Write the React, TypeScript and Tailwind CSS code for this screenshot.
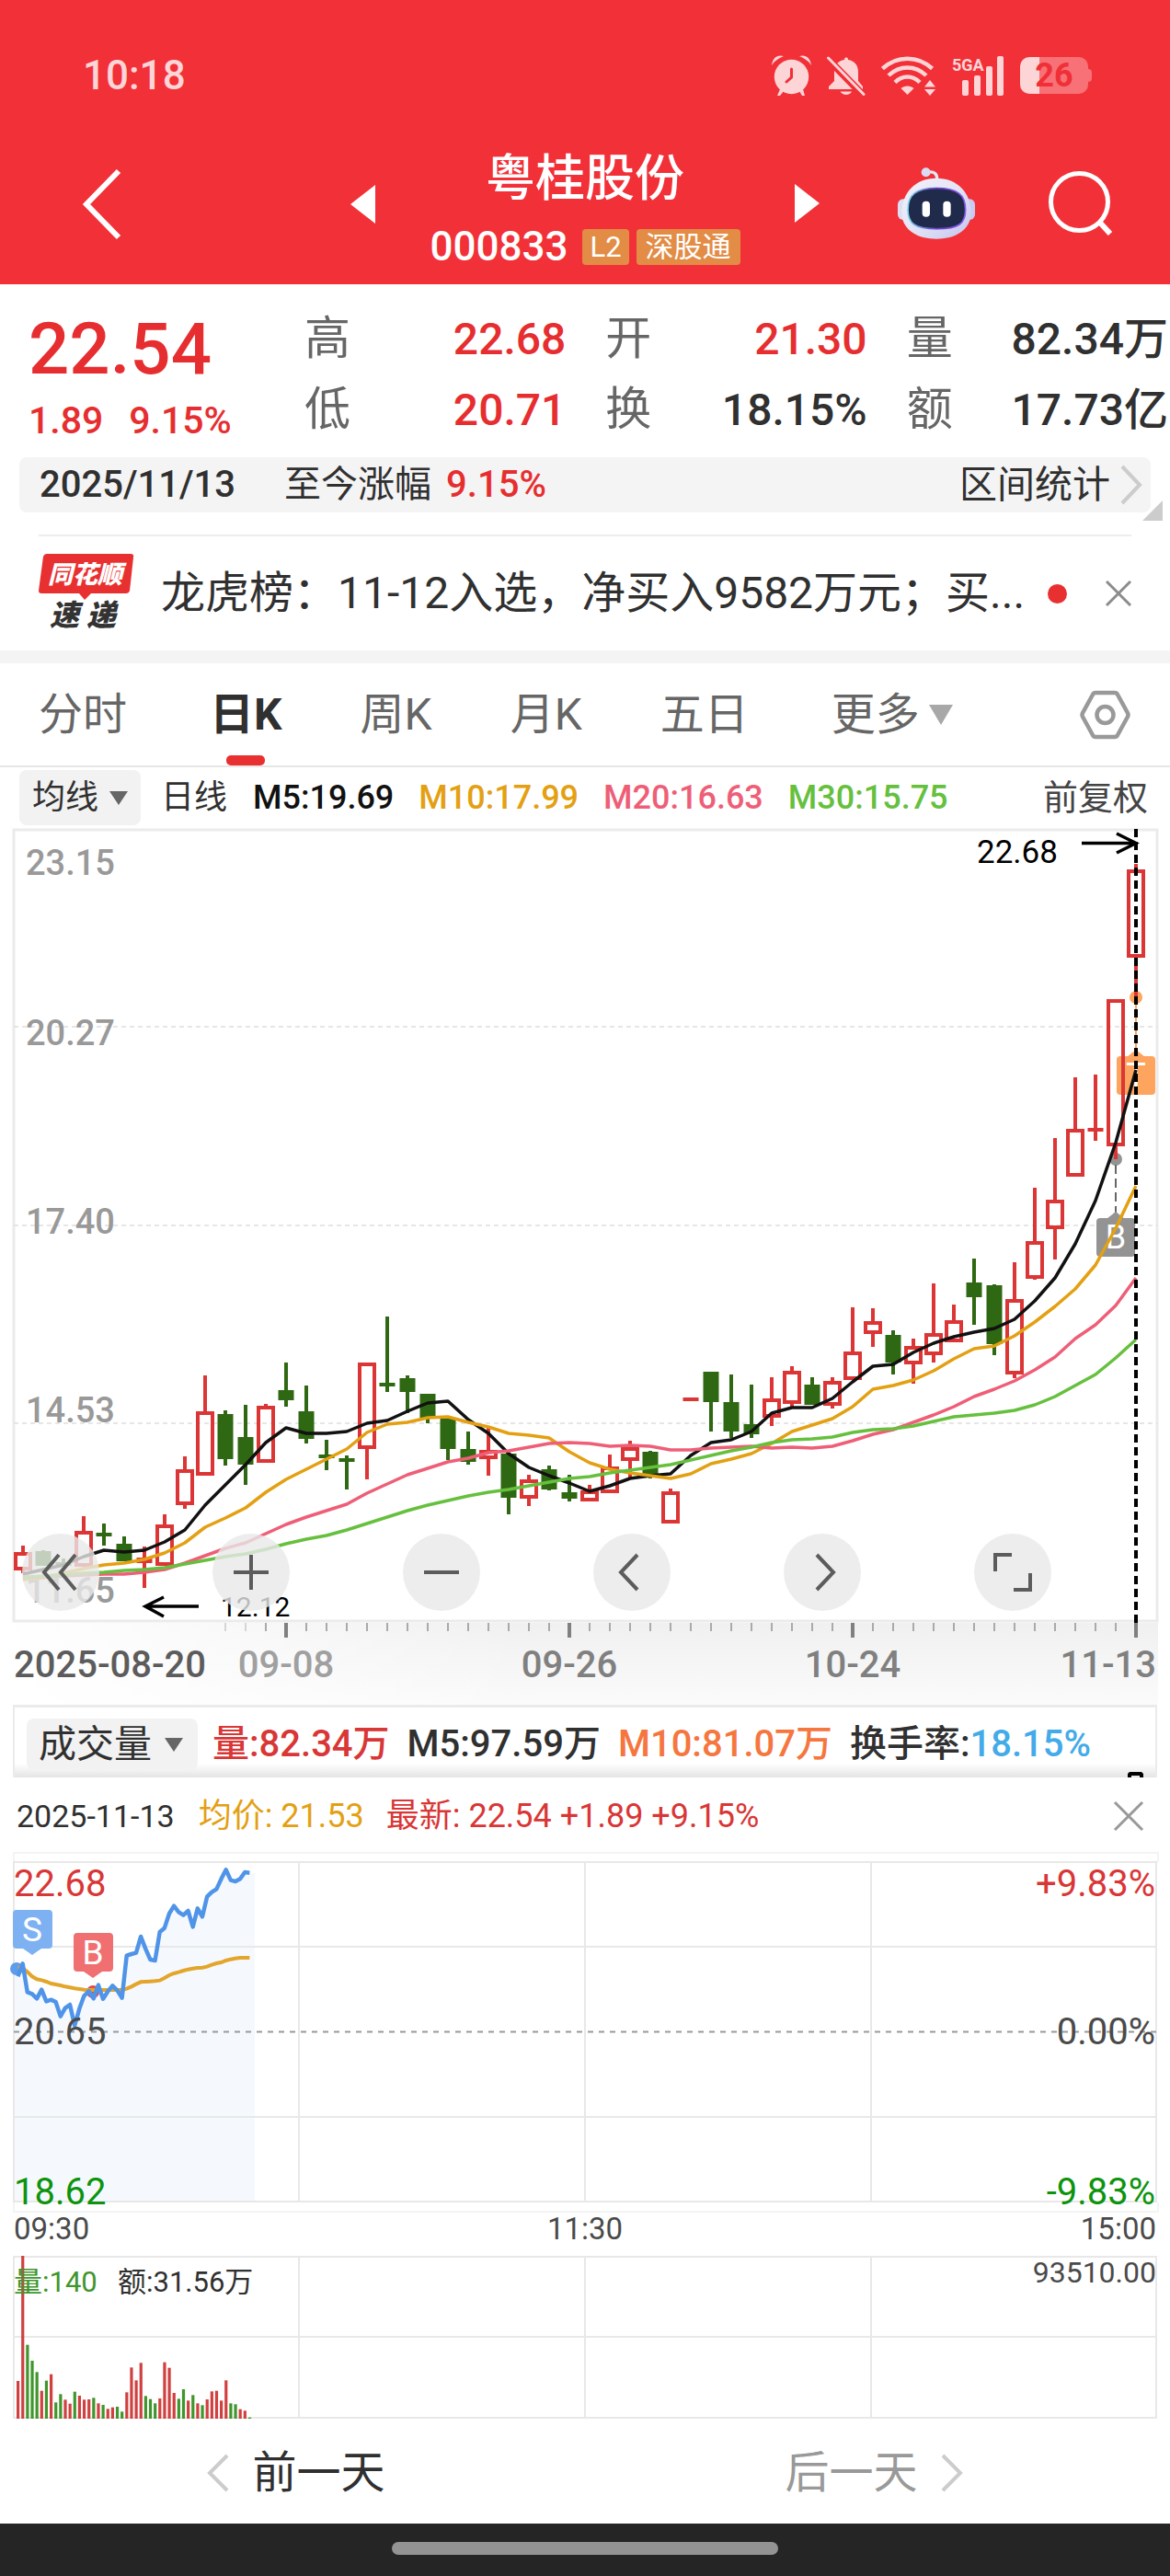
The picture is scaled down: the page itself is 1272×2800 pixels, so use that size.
import React from "react";

type Candle = [up: 0 | 1, high: number, top: number, bottom: number, low: number];

const CANDLES: Candle[] = [
  [1, 780, 787, 807, 810], [0, 785, 786, 802, 802], [0, 794, 800, 800, 803], [1, 748, 764, 803, 803],
  [0, 756, 768, 768, 780], [0, 770, 778, 797, 797], [1, 781, 795, 801, 826], [1, 746, 757, 802, 802],
  [1, 683, 697, 736, 740], [1, 595, 634, 704, 704], [0, 633, 637, 686, 693], [0, 627, 662, 692, 714],
  [1, 626, 628, 690, 690], [0, 581, 611, 622, 629], [0, 606, 634, 664, 669], [0, 665, 683, 683, 698],
  [0, 682, 687, 687, 719], [1, 581, 581, 675, 708], [0, 531, 605, 605, 613], [0, 595, 598, 613, 636],
  [0, 615, 615, 641, 647], [0, 641, 641, 675, 687], [0, 656, 675, 689, 692], [1, 652, 676, 686, 704],
  [0, 680, 680, 728, 746], [1, 703, 708, 729, 737], [0, 693, 697, 719, 720], [0, 703, 724, 731, 732],
  [1, 714, 720, 732, 732], [1, 681, 694, 723, 723], [1, 666, 673, 688, 706], [0, 677, 678, 704, 707],
  [1, 718, 721, 756, 756], [1, 621, 621, 621, 621], [0, 591, 591, 624, 656], [0, 594, 624, 656, 663],
  [0, 605, 648, 659, 663], [1, 597, 620, 641, 650], [1, 585, 590, 626, 629], [0, 597, 605, 627, 627],
  [1, 597, 601, 628, 631], [1, 521, 569, 600, 600], [1, 522, 536, 550, 564], [0, 546, 551, 581, 594],
  [1, 555, 563, 583, 604], [1, 495, 549, 573, 581], [1, 518, 535, 559, 559], [0, 468, 494, 510, 540],
  [0, 496, 497, 561, 573], [1, 472, 512, 594, 598], [1, 391, 449, 490, 491], [1, 337, 404, 436, 469],
  [1, 271, 327, 379, 379], [1, 268, 328, 328, 340], [1, 186, 186, 346, 360], [1, 39, 45, 141, 183],
];

const MA5 = [811, 806, 801, 792, 785, 787, 785, 776, 763, 736, 714, 692, 668, 652, 658, 658, 656, 647, 644, 634, 625, 623, 643, 658, 680, 695, 704, 712, 721, 715, 707, 704, 702, 682, 668, 665, 656, 636, 630, 630, 620, 602, 585, 583, 570, 560, 553, 548, 544, 534, 514, 489, 452, 405, 342, 263];
const MA10 = [817, 815, 810, 805, 801, 799, 795, 788, 777, 760, 750, 739, 722, 708, 697, 686, 675, 657, 648, 646, 641, 640, 646, 651, 658, 660, 663, 678, 690, 697, 701, 704, 707, 702, 691, 686, 680, 669, 656, 649, 642, 629, 610, 606, 600, 590, 577, 566, 563, 552, 537, 520, 501, 475, 435, 389];
const MA20 = [814, 814, 813, 812, 811, 811, 809, 806, 799, 791, 783, 777, 767, 757, 749, 742, 735, 723, 713, 703, 696, 689, 685, 679, 677, 673, 669, 668, 669, 672, 671, 672, 676, 676, 674, 673, 672, 674, 673, 674, 672, 666, 659, 654, 646, 638, 629, 618, 610, 601, 589, 575, 555, 540, 519, 489];
const MA30 = [815, 813, 812, 810, 809, 807, 806, 804, 800, 796, 792, 789, 784, 778, 773, 769, 763, 756, 749, 742, 736, 731, 726, 722, 719, 715, 711, 707, 705, 701, 698, 695, 692, 687, 682, 677, 673, 668, 665, 664, 662, 657, 654, 653, 650, 645, 640, 638, 636, 633, 627, 618, 606, 594, 576, 556];

const PRICE = [415, 373, 466, 472, 487, 458, 496, 491, 498, 545, 518, 507, 575, 520, 478, 463, 487, 443, 488, 464, 445, 460, 485, 347, 342, 338, 285, 325, 360, 363, 270, 257, 210, 185, 205, 215, 201, 253, 193, 220, 155, 140, 130, 97, 67, 101, 105, 97, 75, 77];
const AVERAGE = [385, 388, 400, 415, 424, 427, 432, 438, 441, 444, 448, 451, 454, 456, 458, 459, 459, 459, 459, 459, 459, 459, 459, 455, 448, 440, 433, 432, 431, 430, 428, 420, 411, 405, 401, 396, 392, 389, 387, 386, 383, 377, 372, 369, 363, 359, 356, 354, 354, 354];
const VOLUME = [123, 531, 241, 189, 152, 91, 124, 145, 53, 80, 62, 49, 88, 75, 62, 63, 68, 50, 45, 32, 37, 39, 23, 86, 167, 125, 182, 74, 64, 50, 66, 184, 166, 84, 65, 96, 59, 77, 50, 44, 63, 89, 91, 59, 125, 50, 47, 31, 26, 4];
const VOLUME_UP = "rrgggrgrggrrgrrrgrgrrggrrrrgggrrrrggrgrgrrrrrggrrg";

const dayX = (i: number) => 25 + 22 * i;
const minuteX = (i: number) => 19.5 + 5.14 * i;
const dayLine = (v: number[]) => v.map((y, i) => `${dayX(i)},${y}`).join(" ");
const minuteLine = (v: number[]) => v.map((y, i) => `${minuteX(i)},${y / 3}`).join(" ");

function StatusBar() {
  return (
    <div className="flex h-[164px] items-center justify-between pl-[90px] pr-[85px] text-[#fdd5d7]">
      <span className="text-[44px] font-medium leading-[52px]">10:18</span>
      <div className="flex items-center gap-[17px]">
        <svg width="43" height="44" viewBox="0 0 43 44" fill="currentColor" aria-label="闹钟">
          <circle cx="21.5" cy="23.5" r="18.7" />
          <path d="M0 11C1 3 6-1 13 1C8 3 3 6 0 11ZM43 11C42 3 37-1 30 1C35 3 40 6 43 11Z" />
          <path d="M9 37L6 44H9L13 39ZM34 37L36 44H33L30 39Z" />
          <path d="M21.5 15V24L16 29" fill="none" stroke="#f02f37" strokeWidth="3" strokeLinecap="round" />
        </svg>
        <svg width="42" height="43" viewBox="0 0 42 43" fill="currentColor" aria-label="静音">
          <path d="M21 1.5C22 1.500 23 2 23 4C30 5 34 10 34 17V27L39 33V36H2V33L8 27V17C8 10 12 5 19 4C19 2 20 1.500 21 1.500Z" />
          <path d="M14.500 38.500H27C25 43 17 43 14.500 38.500Z" />
          <path d="M-1 1L41 44" stroke="#f02f37" strokeWidth="8" />
          <path d="M1.500 2L40 41.500" stroke="currentColor" strokeWidth="3" strokeLinecap="round" />
        </svg>
        <svg width="60" height="43" viewBox="0 0 60 43" aria-label="无线网络">
          <g fill="none" stroke="currentColor" strokeWidth="4.500">
            <path d="M1.500 13.500C17-1 40-1 55.500 13.500" />
            <path d="M8 21C20 9.500 37 9.500 49 21" />
            <path d="M15 28.500C23 20.500 34 20.500 42 28.500" />
          </g>
          <path d="M28.500 42L21.500 35C25 31.500 32 31.500 35.500 35Z" fill="currentColor" />
          <path d="M47 33.500L53 26L59 33.500ZM47 36L53 43L59 36Z" fill="currentColor" />
        </svg>
        <svg width="57" height="44" viewBox="0 0 57 44" fill="currentColor" aria-label="5GA">
          <text x="0" y="17" fontSize="18" fontWeight="700" fontFamily="Roboto, sans-serif">5GA</text>
          <rect x="11" y="27" width="7" height="17" rx="2" />
          <rect x="24" y="22" width="7" height="22" rx="2" />
          <rect x="37" y="12" width="7" height="32" rx="2" />
          <rect x="49" y="1" width="7" height="43" rx="2" />
        </svg>
        <div className="relative flex items-center">
          <div className="flex h-10 w-[74px] items-center justify-center rounded-[10px] bg-[linear-gradient(to_right,#fdd5d7_21px,#f77176_21px)] text-[36px] font-bold leading-10 text-[#f02f37]">26</div>
          <div className="h-[14px] w-1 rounded-r bg-[#f77176]" />
        </div>
      </div>
    </div>
  );
}

function Robot() {
  return (
    <svg width="84" height="78" viewBox="465 428 252 232">
      <defs>
        <linearGradient id="shell" x1="0" y1="0" x2="1" y2="1">
          <stop offset="0" stopColor="#f2f3fb" />
          <stop offset=".5" stopColor="#e4e4f5" />
          <stop offset="1" stopColor="#c3c5ee" />
        </linearGradient>
        <linearGradient id="rim" x1="0" y1="0" x2="1" y2="0">
          <stop offset="0" stopColor="#7fd6ee" />
          <stop offset=".5" stopColor="#6a3ec9" />
          <stop offset="1" stopColor="#8c5cf0" />
        </linearGradient>
      </defs>
      <path d="M560 443C585 438 595 448 593 470" fill="none" stroke="#e6e6f6" strokeWidth="10" />
      <circle cx="557" cy="443" r="15" fill="#d9dcf2" />
      <rect x="465" y="530" width="40" height="68" rx="18" fill="#dcdef3" />
      <rect x="677" y="530" width="40" height="68" rx="18" fill="#c9caef" />
      <path d="M591 462C660 462 704 510 704 575C704 630 655 660 591 660C527 660 478 630 478 575C478 510 522 462 591 462Z" fill="url(#shell)" />
      <path d="M592 495C660 495 686 515 686 565C686 610 665 627 592 627C520 627 498 610 498 565C498 515 524 495 592 495Z" fill="#202a4a" stroke="url(#rim)" strokeWidth="5" />
      <rect x="545" y="537" width="25" height="51" rx="12" fill="#fff" />
      <rect x="613" y="537" width="25" height="51" rx="12" fill="#fff" />
    </svg>
  );
}

function TitleBar() {
  return (
    <div className="grid h-[145px] grid-cols-[1fr_456px_1fr] items-start text-white">
      <div className="flex items-center justify-between pl-[88px] pt-[18px]">
        <button aria-label="返回">
          <svg width="46" height="80" viewBox="0 0 46 80" fill="none" stroke="currentColor" strokeWidth="6"><path d="M41 4L6 40L41 76" /></svg>
        </button>
        <button aria-label="上一只">
          <svg width="27" height="42" viewBox="0 0 27 42" fill="currentColor"><path d="M27 0V42L0 21Z" /></svg>
        </button>
      </div>
      <div className="flex flex-col items-center pt-[2px]">
        <h1 className="text-[54px] font-medium leading-[58px]">粤桂股份</h1>
        <div className="mt-[24px] flex items-center gap-2">
          <span className="mr-2 text-[44px] font-medium leading-10">000833</span>
          <span className="rounded bg-[#e28c46] px-[8px] text-[31px] leading-[39px]">L2</span>
          <span className="rounded bg-[#e28c46] px-[10px] text-[31px] leading-[39px]">深股通</span>
        </div>
      </div>
      <div className="flex items-center justify-between pr-[62px] pt-[18px]">
        <button aria-label="下一只">
          <svg width="27" height="42" viewBox="0 0 27 42" fill="currentColor"><path d="M0 0V42L27 21Z" /></svg>
        </button>
        <div className="flex items-center gap-20">
          <button aria-label="智能助手"><Robot /></button>
          <button aria-label="搜索">
            <svg width="70" height="70" viewBox="0 0 70 70" fill="none" stroke="currentColor" strokeWidth="5"><circle cx="33.500" cy="33.500" r="31" /><path d="M55 55L67 68" strokeWidth="6" /></svg>
          </button>
        </div>
      </div>
    </div>
  );
}

function Stat({ label, value, up }: { label: string; value: string; up?: boolean }) {
  return (
    <div className="flex items-center justify-between leading-[77px]">
      <dt className="text-[50px] text-[#666]">{label}</dt>
      <dd className={up ? "text-[48px] font-medium text-[#e62e30]" : "text-[48px] font-medium text-[#303030]"}>{value}</dd>
    </div>
  );
}

function Quote() {
  return (
    <section className="flex items-start pb-[13px] pl-[31px] pt-[21px]">
      <div className="w-[300px] shrink-0 font-medium text-[#e62e30]">
        <div className="text-[78px] leading-[100px]">22.54</div>
        <div className="flex gap-7 text-[41px] leading-[54px]"><span>1.89</span><span>9.15%</span></div>
      </div>
      <dl className="grid flex-1 grid-cols-3 gap-x-[43px] pr-[2px]">
        <Stat label="高" value="22.68" up />
        <Stat label="开" value="21.30" up />
        <Stat label="量" value="82.34万" />
        <Stat label="低" value="20.71" up />
        <Stat label="换" value="18.15%" />
        <Stat label="额" value="17.73亿" />
      </dl>
    </section>
  );
}

function RangeBar() {
  return (
    <div className="relative mx-[21px] flex h-[60px] items-center rounded-lg bg-[#f4f4f4] pl-[22px] pr-2 text-[40px] leading-[60px] text-[#303030]">
      <span className="font-medium">2025/11/13</span>
      <span className="ml-[53px]">至今涨幅</span>
      <span className="ml-4 font-medium text-[#e62e30]">9.15%</span>
      <button className="ml-auto flex items-center gap-[10px] text-[41px]">
        区间统计
        <svg width="26" height="44" viewBox="0 0 26 44" fill="none" stroke="#ccc" strokeWidth="4"><path d="M3 2L22 22L3 42" /></svg>
      </button>
      <svg className="absolute -bottom-[9px] -right-[13px]" width="22" height="22" viewBox="0 0 22 22" fill="#ccc"><path d="M22 0V22H0Z" /></svg>
    </div>
  );
}

function News() {
  return (
    <div className="mx-[42px] mt-6 flex h-[126px] items-center border-t-2 border-[#ededed]">
      <svg className="shrink-0 overflow-visible" width="104" height="86" viewBox="0 0 104 86" fontFamily="Noto Sans CJK SC, sans-serif" fontWeight="900" fontStyle="italic">
        <path d="M9 0H100Q104 0 103 4L99 40Q98 43 95 43H57L50 50L44 43H3Q0 43 0 40L5 3Q6 0 9 0Z" fill="#e93030" />
        <text x="10" y="32" fontSize="27" fill="#fff">同花顺</text>
        <text y="78" fontSize="32" fill="#333"><tspan x="12">速</tspan><tspan x="52">递</tspan></text>
      </svg>
      <a href="#news" className="ml-[29px] flex-1 whitespace-nowrap text-[48px] leading-[70px] text-[#303030]">龙虎榜：11-12入选，净买入9582万元；买...</a>
      <span className="ml-3 size-[21px] shrink-0 rounded-full bg-[#e93030]" />
      <button aria-label="关闭" className="ml-[42px]">
        <svg width="28" height="28" viewBox="0 0 28 28" stroke="#8c8c8c" strokeWidth="3"><path d="M1 1L27 27M27 1L1 27" /></svg>
      </button>
    </div>
  );
}

function Tabs() {
  return (
    <nav className="flex h-[113px] items-center border-b-2 border-[#e6e6e6] pl-[42px] pr-[43px] text-[48px] leading-[111px] text-[#666]">
      <button>分时</button>
      <button className="relative ml-[90px] font-bold text-[#303030]">
        日K
        <span className="absolute bottom-0 left-1/2 h-[11px] w-[42px] -translate-x-1/2 rounded-[5px] bg-[#e93030]" />
      </button>
      <button className="ml-[85px]">周K</button>
      <button className="ml-[85px]">月K</button>
      <button className="ml-[85px]">五日</button>
      <button className="ml-[90px] flex items-center gap-[10px]">
        更多
        <svg width="26" height="22" viewBox="0 0 26 22" fill="#a8a8a8"><path d="M0 0H26L13 22Z" /></svg>
      </button>
      <button aria-label="设置" className="ml-auto">
        <svg width="55" height="54" viewBox="0 0 55 54" fill="none" stroke="#999" strokeWidth="4.500" strokeLinejoin="round"><path d="M17 3H38Q40 3 41 5L52 25Q53 27 52 29L41 49Q40 51 38 51H17Q15 51 14 49L3 29Q2 27 3 25L14 5Q15 3 17 3Z" /><circle cx="27.500" cy="27" r="9" /></svg>
      </button>
    </nav>
  );
}

function Caret() {
  return <svg width="20" height="15" viewBox="0 0 20 15" fill="#666"><path d="M0 0H20L10 15Z" /></svg>;
}

function Averages() {
  return (
    <div className="flex h-[66px] items-center pl-[21px] pr-6 text-[36px] font-medium leading-[60px]">
      <button className="flex items-center gap-[12px] rounded-lg bg-[#f2f2f2] px-[14px] font-normal text-[#303030]">均线<Caret /></button>
      <span className="ml-[22px] font-normal text-[#303030]">日线</span>
      <span className="ml-[28px] text-[#111]">M5:19.69</span>
      <span className="ml-[27px] text-[#e3a012]">M10:17.99</span>
      <span className="ml-[27px] text-[#ee5f77]">M20:16.63</span>
      <span className="ml-[27px] text-[#66c03e]">M30:15.75</span>
      <button className="ml-auto text-[38px] font-normal text-[#444]">前复权</button>
    </div>
  );
}

function CandleMark({ candle, x }: { candle: Candle; x: number }) {
  const [up, high, top, bottom, low] = candle;
  const color = up ? "#dc3535" : "#2f6812";
  if (bottom - top < 8) {
    return (
      <g fill={color}>
        <rect x={x - 2} y={high} width="4" height={low - high} />
        <rect x={x - 8.5} y={top - 2} width="17" height={Math.max(4, bottom - top)} />
      </g>
    );
  }
  return (
    <g fill={color} stroke={color} strokeWidth="0">
      <rect x={x - 2} y={high} width="4" height={top - high} />
      <rect x={x - 2} y={bottom} width="4" height={low - bottom} />
      {up ? (
        <rect x={x - 8} y={top + 2} width="16" height={bottom - top - 4} fill="none" strokeWidth="4" />
      ) : (
        <rect x={x - 8.5} y={top} width="17" height={bottom - top} />
      )}
    </g>
  );
}

function ChartButton({ label, d }: { label: string; d: string }) {
  return (
    <button aria-label={label} className="flex size-[84px] items-center justify-center rounded-full bg-[#e9e9e9]/80">
      <svg width="44" height="44" viewBox="0 0 44 44" fill="none" stroke="#5c5c5c" strokeWidth="4"><path d={d} /></svg>
    </button>
  );
}

function DailyChart() {
  const ticks = CANDLES.map((_, i) => i).filter((i) => i >= 10);
  return (
    <section>
      <div className="relative">
        <svg className="block w-full" viewBox="0 0 1272 864" fontFamily="Roboto, sans-serif">
          <rect x="15" y="2" width="1243" height="860" fill="none" stroke="#ebebeb" strokeWidth="3" />
          <g stroke="#dedede" strokeWidth="1.500" strokeDasharray="5 4">
            <path d="M15 216H1258M15 432H1258M15 647H1258" />
          </g>
          <g fontSize="38" fontWeight="500" fill="#999">
            <text x="28" y="51">23.15</text>
            <text x="28" y="236">20.27</text>
            <text x="28" y="441">17.40</text>
            <text x="28" y="646">14.53</text>
            <text x="28" y="842">11.65</text>
          </g>
          <g fill="#fda45f">
            <circle cx="1235" cy="184" r="7" />
            <path d="M1235 190V244" stroke="#fda45f" strokeWidth="2" />
            <path d="M1225 249L1235 241L1245 249Z" />
            <rect x="1214" y="248" width="42" height="42" rx="4" />
          </g>
          <g fill="#939393">
            <circle cx="1213" cy="360" r="7" />
            <path d="M1213 366V418" stroke="#666" strokeWidth="2" strokeDasharray="10 5" />
            <path d="M1203 425L1213 417L1223 425Z" />
            <rect x="1192" y="424" width="42" height="42" rx="4" />
          </g>
          <g fontSize="36" fill="#fff" textAnchor="middle">
            <text x="1235" y="281">T</text>
            <text x="1213" y="457">B</text>
          </g>
          {CANDLES.map((c, i) => <CandleMark key={i} candle={c} x={dayX(i)} />)}
          <g fill="none" strokeWidth="3.500" strokeLinejoin="round">
            <polyline points={dayLine(MA5)} stroke="#111" />
            <polyline points={dayLine(MA10)} stroke="#e3a012" />
            <polyline points={dayLine(MA20)} stroke="#ee5f77" />
            <polyline points={dayLine(MA30)} stroke="#66c03e" />
          </g>
          <path d="M1235 1V864" stroke="#000" strokeWidth="4" strokeDasharray="9 5" />
          <g fill="none" stroke="#000" strokeWidth="3.500">
            <path d="M1176 16.500H1235M1214 6L1235 16.500L1214 27" />
            <path d="M216 846H158M178 836L158 846L178 857" />
          </g>
          <text x="1062" y="38" fontSize="35">22.68</text>
          <text x="240" y="857" fontSize="30">12.12</text>
        </svg>
        <div className="absolute inset-x-6 bottom-[13px] flex gap-[123px]">
          <ChartButton label="最早" d="M20 3L4 22L20 41M38 3L22 22L38 41" />
          <ChartButton label="放大" d="M3 22H41M22 3V41" />
          <ChartButton label="缩小" d="M3 22H41" />
          <ChartButton label="左移" d="M28 3L10 22L28 41" />
          <ChartButton label="右移" d="M16 3L34 22L16 41" />
          <ChartButton label="全屏" d="M3 21V3H21M41 23V41H23" />
        </div>
      </div>
      <svg className="block w-full bg-[linear-gradient(to_right,#fff,transparent_45%),linear-gradient(#f0f0f0,#fbfbfb)]" viewBox="0 0 1272 89" fontFamily="Roboto, sans-serif">
        <rect x="1259" y="0" width="13" height="89" fill="#fff" />
        {ticks.map((i) => {
          const major = i % 14 === 13;
          return <rect key={i} x={dayX(i) - (major ? 2 : 1)} y="-2" width={major ? 4 : 2} height={major ? 18 : 11} fill={major ? "#808080" : i < 12 ? "#d5d5d5" : "#aaa"} />;
        })}
        <g fontSize="40" fontWeight="500" fill="#808080" textAnchor="middle">
          <text x="15" y="59" fill="#5c5c5c" textAnchor="start">2025-08-20</text>
          <text x="311" y="59" fill="#a0a0a0">09-08</text>
          <text x="619" y="59">09-26</text>
          <text x="927" y="59">10-24</text>
          <text x="1257" y="59" textAnchor="end">11-13</text>
        </g>
      </svg>
      <div className="mx-[14px] flex h-[79px] items-center border-x-2 border-t-3 border-[#ebebeb] bg-[linear-gradient(#fff_80%,#e4e4e4)] pl-[13px] pt-1 text-[40px] font-medium leading-[56px] text-[#303030]">
        <button className="flex items-center gap-[14px] rounded-lg bg-[#f2f2f2] pl-[13px] pr-[16px] text-[41px] font-normal">成交量<Caret /></button>
        <span className="ml-4 text-[#d93636]">量:82.34万</span>
        <span className="ml-[19px]">M5:97.59万</span>
        <span className="ml-[19px] text-[#f5763e]">M10:81.07万</span>
        <span className="ml-[19px]">换手率:<span className="text-[#42abe8]">18.15%</span></span>
        <span className="ml-auto mr-[13px] h-[6px] w-[17px] self-end rounded-t border-x-4 border-t-4 border-black" />
      </div>
    </section>
  );
}

function IntradayPanel() {
  return (
    <section className="bg-white">
      <div className="flex h-[78px] items-center pl-[18px] pr-[28px] pt-[6px] text-[36px] leading-[44px]">
        <span className="text-[34px] text-[#303030]">2025-11-13</span>
        <span className="ml-[26px] text-[#e3a012]">均价: 21.53</span>
        <span className="ml-[24px] text-[#d93636]">最新: 22.54 +1.89 +9.15%</span>
        <button aria-label="关闭" className="ml-auto">
          <svg width="34" height="34" viewBox="0 0 34 34" stroke="#999" strokeWidth="3"><path d="M2 2L32 32M32 2L2 32" /></svg>
        </button>
      </div>
      <svg className="block w-full" viewBox="0 0 1272 438" fontFamily="Roboto, sans-serif">
        <path d="M15 14V4H1259V14M15 384V394H1259V384" fill="none" stroke="#f4f4f4" strokeWidth="2" />
        <polygon points={`15,383 15,130 ${minuteLine(PRICE)} 277,26 277,383`} fill="#f5f9fe" />
        <g fill="none" stroke="#e8e8e8" strokeWidth="2">
          <path d="M15 14H1257V383H15ZM325 14V383M636 14V383M947 14V383M15 106H1257M15 291H1257" />
        </g>
        <path d="M15 198.500H1257" stroke="#999" strokeWidth="2" strokeDasharray="6 6" />
        <circle cx="18" cy="130" r="7" fill="#5c9ded" />
        <circle cx="101" cy="155" r="7" fill="#e5484a" />
        <polyline points={minuteLine(AVERAGE)} fill="none" stroke="#e3a52b" strokeWidth="4" />
        <polyline points={minuteLine(PRICE)} fill="none" stroke="#4f94e8" strokeWidth="4.500" strokeLinejoin="round" />
        <g fontSize="40" fill="#4a4a4a">
          <text x="15" y="51" fill="#d93636">22.68</text>
          <text x="15" y="212">20.65</text>
          <text x="15" y="386" fill="#0d930d">18.62</text>
          <g textAnchor="end">
            <text x="1256" y="51" fill="#d93636">+9.83%</text>
            <text x="1256" y="212">0.00%</text>
            <text x="1256" y="386" fill="#0d930d">-9.83%</text>
          </g>
        </g>
        <g fontSize="33" fill="#4a4a4a">
          <text x="15" y="424">09:30</text>
          <text x="636" y="424" textAnchor="middle">11:30</text>
          <text x="1257" y="424" textAnchor="end">15:00</text>
        </g>
        <path d="M18 66H53Q57 66 57 70V104Q57 108 53 108H45L35 115L25 108H18Q14 108 14 104V70Q14 66 18 66Z" fill="#7eb1f2" />
        <path d="M84 91H119Q123 91 123 95V129Q123 133 119 133H111L101 140L91 133H84Q80 133 80 129V95Q80 91 84 91Z" fill="#f06f70" />
        <g fontSize="37" fill="#fff" textAnchor="middle">
          <text x="35" y="100">S</text>
          <text x="101" y="125">B</text>
        </g>
      </svg>
      <svg className="block w-full" viewBox="0 0 1272 184" fontFamily="Roboto, Noto Sans CJK SC, sans-serif">
        <g fill="none" stroke="#e8e8e8" strokeWidth="2">
          <path d="M15 5H1257V180H15ZM325 5V180M636 5V180M947 5V180M15 92H1257" />
        </g>
        {VOLUME.map((v, i) => (
          <rect key={i} x={minuteX(i) - 1.5} y={181 - v / 3} width="3.2" height={v / 3} fill={VOLUME_UP[i] === "r" ? "#d04040" : "#3f962c"} />
        ))}
        <text x="15" y="43" fontSize="31" fill="#3f962c">量:140</text>
        <text x="128" y="43" fontSize="31" fill="#303030">额:31.56万</text>
        <text x="1257" y="33" fontSize="32" fill="#4a4a4a" textAnchor="end">93510.00</text>
      </svg>
      <div className="grid h-[111px] grid-cols-2 px-2 text-[48px] leading-[111px]">
        <button className="flex items-center justify-center gap-[25px] text-[#303030]">
          <svg width="24" height="42" viewBox="0 0 24 42" fill="none" stroke="#ccc" strokeWidth="4"><path d="M22 2L3 21L22 40" /></svg>
          前一天
        </button>
        <button className="flex items-center justify-center gap-[25px] text-[#999]">
          后一天
          <svg width="24" height="42" viewBox="0 0 24 42" fill="none" stroke="#ccc" strokeWidth="4"><path d="M2 2L21 21L2 40" /></svg>
        </button>
      </div>
    </section>
  );
}

export default function App() {
  return (
    <div className="w-full overflow-hidden bg-white font-['Roboto','Noto_Sans_CJK_SC',sans-serif]">
      <header className="bg-[#f23038]">
        <StatusBar />
        <TitleBar />
      </header>
      <Quote />
      <RangeBar />
      <News />
      <div className="h-[14px] bg-[#f4f4f4]" />
      <Tabs />
      <Averages />
      <DailyChart />
      <IntradayPanel />
      <footer className="flex h-[57px] items-center justify-center bg-[#252525]">
        <div className="mb-1 h-[14px] w-[420px] rounded-full bg-[#939393]" />
      </footer>
    </div>
  );
}
